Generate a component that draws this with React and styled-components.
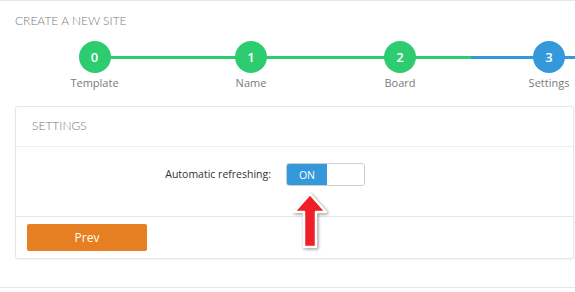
import React from "react";
import styled, { createGlobalStyle } from "styled-components";

const GlobalStyle = createGlobalStyle`
  html, body {
    margin: 0;
    padding: 0;
    background: #fff;
    overflow: hidden;
  }
  body {
    font-family: "Open Sans", "Liberation Sans", sans-serif;
  }
`;

const Page = styled.div`
  position: relative;
  width: 575px;
  height: 292px;
  border-top: 1px solid #e3e9ee;
  box-sizing: border-box;
  padding: 12px 0 0 15px;
  overflow: hidden;
`;

const Title = styled.div`
  font-family: "Lato", "Open Sans", sans-serif;
  font-weight: 300;
  font-size: 12px;
  line-height: 16px;
  color: #7a7a7a;
  text-transform: uppercase;
`;

const Stepper = styled.div`
  display: grid;
  grid-template-columns: 157px 156px 142px 156px;
  margin: 12px 0 0 1px;
  width: 700px;
`;

const Step = styled.div`
  position: relative;
  display: flex;
  flex-direction: column;
  align-items: center;

  &::before {
    content: "";
    position: absolute;
    top: 15px;
    height: 3px;
    left: ${({ $first }) => ($first ? "50%" : "0")};
    right: ${({ $last }) => ($last ? "-100px" : "0")};
    background: ${({ $line }) => $line};
  }
`;

const Circle = styled.div`
  position: relative;
  z-index: 1;
  width: 32px;
  height: 32px;
  border-radius: 50%;
  background: ${({ $color }) => $color};
  color: #fff;
  font-size: 13px;
  font-weight: 600;
  display: flex;
  align-items: center;
  justify-content: center;
`;

const StepLabel = styled.div`
  margin-top: 2px;
  font-size: 11px;
  line-height: 16px;
  color: #7b7b7b;
`;

const Panel = styled.div`
  width: 559px;
  box-sizing: border-box;
  margin-top: 15px;
  border: 1px solid #e2e8ec;
  border-radius: 3px;
  box-shadow: 0 1px 2px rgba(0, 0, 0, 0.05);
  background: #fff;
`;

const PanelHead = styled.div`
  height: 40px;
  box-sizing: border-box;
  padding: 11px 0 0 16px;
  border-bottom: 1px dotted #dfe4e8;
  font-family: "Lato", "Open Sans", sans-serif;
  font-weight: 300;
  font-size: 12px;
  line-height: 16px;
  color: #7a7a7a;
`;

const PanelBody = styled.div`
  height: 70px;
  box-sizing: border-box;
  border-bottom: 1px solid #e2e8ec;
  display: grid;
  grid-template-columns: 255px auto;
  column-gap: 15px;
  align-items: start;
  padding-top: 16px;
`;

const FieldLabel = styled.label`
  text-align: right;
  font-size: 10.5px;
  line-height: 23px;
  color: #333;
`;

const Toggle = styled.div`
  display: flex;
  width: 79px;
  height: 23px;
  box-sizing: border-box;
  border: 1px solid #c9cfd4;
  border-radius: 3px;
  overflow: hidden;
`;

const ToggleHalf = styled.div`
  width: ${({ $on }) => ($on ? "40px" : "auto")};
  flex: ${({ $on }) => ($on ? "none" : "1")};
  background: ${({ $on }) => ($on ? "#3498db" : "#fff")};
  color: #fff;
  font-size: 10.5px;
  display: flex;
  align-items: center;
  justify-content: center;
`;

const PanelFoot = styled.div`
  padding: 7px 0 7px 11px;
`;

const PrevButton = styled.button`
  width: 120px;
  height: 27px;
  border: none;
  border-radius: 2px;
  background: #e67e22;
  color: #fff;
  font-family: "Open Sans", sans-serif;
  font-size: 12px;
  padding: 0;
  cursor: pointer;
`;

const BottomRule = styled.div`
  position: absolute;
  left: 0;
  right: 0;
  top: 286px;
  border-top: 1px solid #e3e9ee;
`;

const Arrow = styled.svg`
  position: absolute;
  left: 290px;
  top: 190px;
  filter: drop-shadow(1px 1px 1.5px rgba(0, 0, 0, 0.45));
`;

const GREEN = "#2ecc71";
const BLUE = "#3498db";

const steps = [
  { n: 0, label: "Template", color: GREEN, line: GREEN },
  { n: 1, label: "Name", color: GREEN, line: GREEN },
  { n: 2, label: "Board", color: GREEN, line: GREEN },
  { n: 3, label: "Settings", color: BLUE, line: BLUE },
];

export default function App() {
  return (
    <Page>
      <GlobalStyle />
      <Title>Create a new site</Title>
      <Stepper>
        {steps.map((s, i) => (
          <Step
            key={s.n}
            $line={s.line}
            $first={i === 0}
            $last={i === steps.length - 1}
          >
            <Circle $color={s.color}>{s.n}</Circle>
            <StepLabel>{s.label}</StepLabel>
          </Step>
        ))}
      </Stepper>
      <Panel>
        <PanelHead>SETTINGS</PanelHead>
        <PanelBody>
          <FieldLabel>Automatic refreshing:</FieldLabel>
          <Toggle>
            <ToggleHalf $on>ON</ToggleHalf>
            <ToggleHalf />
          </Toggle>
        </PanelBody>
        <PanelFoot>
          <PrevButton>Prev</PrevButton>
        </PanelFoot>
      </Panel>
      <BottomRule />
      <Arrow width="40" height="62" viewBox="0 0 40 62">
        <polygon
          points="20,3 36,21 26,21 26,56 14,56 14,21 4,21"
          fill="#ee1f27"
          stroke="#fff"
          strokeWidth="2.5"
          strokeLinejoin="round"
        />
      </Arrow>
    </Page>
  );
}
